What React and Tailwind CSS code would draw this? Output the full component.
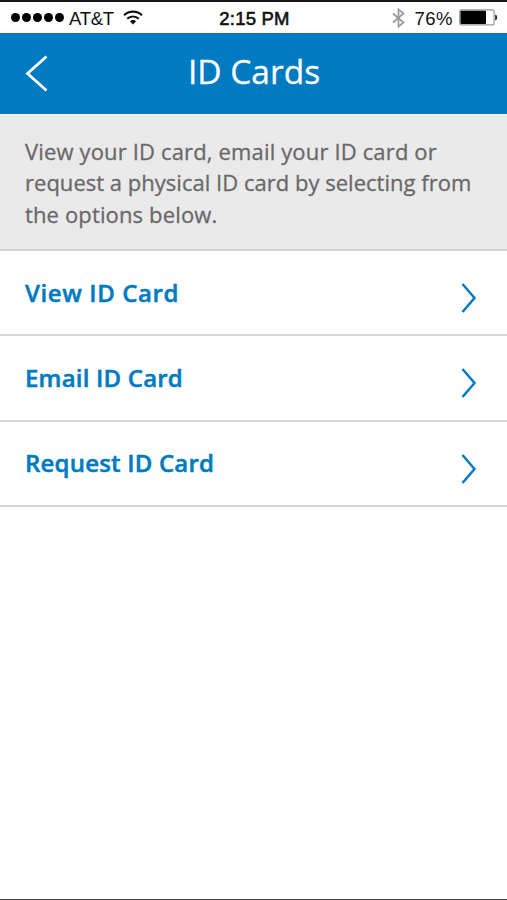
import React from 'react';

const options = [
  { id: 'view', label: 'View ID Card', tracking: 'tracking-[0.6px]' },
  { id: 'email', label: 'Email ID Card', tracking: 'tracking-[0.2px]' },
  { id: 'request', label: 'Request ID Card', tracking: 'tracking-[0.2px]' },
];

const WifiIcon = () => (
  <svg width="20" height="16" viewBox="0 0 20 16" fill="none" stroke="#111" strokeWidth="2.1">
    <path d="M1 5.2C6 .4 14 .4 19 5.2" />
    <path d="M4.2 8.7C7.4 5.7 12.6 5.7 15.8 8.7" />
    <path d="M6.9 11.2C8.7 9.6 11.3 9.6 13.1 11.2L10 14.6Z" fill="#111" stroke="none" />
  </svg>
);

const BluetoothIcon = () => (
  <svg width="13" height="20" viewBox="0 0 13 20" fill="none" stroke="#999" strokeWidth="1.7">
    <path d="M1 5.5L11.5 14.5L6.5 18.6V1.4L11.5 5.5L1 14.5" />
  </svg>
);

const BatteryIcon = () => (
  <svg width="39" height="17" viewBox="0 0 39 17">
    <rect x="0.7" y="0.9" width="34.4" height="15" rx="2" fill="#fff" stroke="#999" strokeWidth="1.2" />
    <rect x="1.5" y="1.7" width="25.5" height="13.4" rx="1" fill="#000" />
    <path d="M36.2 5.4C38.8 6 38.8 10.8 36.2 11.4Z" fill="#222" />
  </svg>
);

const StatusBar = () => (
  <div className="h-[33px] border-t-2 border-[#161314] bg-white grid grid-cols-3 items-center font-['Liberation_Sans',sans-serif] text-[18.5px] leading-none text-[#111]">
    <div className="flex items-center pl-[11px]">
      <div className="flex gap-[2px]">
        {[...Array(5)].map((_, index) => (
          <span key={index} className="size-[9px] rounded-full bg-black" />
        ))}
      </div>
      <span className="ml-[5px] mr-[9px] pt-[3px] tracking-[-0.3px]">AT&amp;T</span>
      <WifiIcon />
    </div>
    <span className="pl-[2px] pt-[3px] text-center tracking-[0.2px] [-webkit-text-stroke:0.6px_#111]">2:15 PM</span>
    <div className="flex items-center justify-end pr-[9px]">
      <BluetoothIcon />
      <span className="ml-[9px] mr-[6px] pt-[3px] tracking-[0.5px]">76%</span>
      <BatteryIcon />
    </div>
  </div>
);

const Header = () => (
  <header className="h-[81px] bg-[#007ac1] flex items-center px-[25px] text-white">
    <button aria-label="Back" className="w-12">
      <svg width="24" height="38" viewBox="0 0 24 38" fill="none" stroke="#fff" strokeWidth="2.8">
        <path d="M21.5 1.5L2.5 18.5L21.5 35.5" />
      </svg>
    </button>
    <h1 className="flex-1 pl-px pb-[4px] text-center text-[33.5px] leading-none [-webkit-text-stroke:0.3px_#fff]">ID Cards</h1>
    <span className="w-12" />
  </header>
);

const ChevronIcon = () => (
  <svg width="17" height="30" viewBox="0 0 17 30" fill="none" stroke="#007ac1" strokeWidth="2.5">
    <path d="M2.5 1L14.5 15L2.5 29" />
  </svg>
);

export default function App() {
  return (
    <div className="flex h-[900px] w-[507px] flex-col overflow-hidden border-b border-[#444] bg-white font-['Open_Sans',sans-serif]">
      <StatusBar />
      <Header />

      <div className="h-[137px] border-t border-b-2 border-t-[#f6f6f6] border-b-[#d3d3d3] bg-[#eaeaea] px-[25px] pt-[20.5px]">
        <p className="whitespace-nowrap text-[22px] leading-[31.5px] text-[#696969] [-webkit-text-stroke:0.3px_#696969]">
          <span className="block tracking-[0.15px]">View your ID card, email your ID card or</span>
          <span className="block tracking-[0.02px]">request a physical ID card by selecting from</span>
          <span className="block tracking-[0.14px]">the options below.</span>
        </p>
      </div>

      <ul>
        {options.map((option) => (
          <li
            key={option.id}
            className="flex h-[85.33px] items-center justify-between border-b-2 border-[#d8d8d8] pl-[25px] pr-[30px] text-[#007ac1]"
          >
            <span className={`whitespace-nowrap text-[24px] font-semibold leading-none [-webkit-text-stroke:0.5px_#007ac1] ${option.tracking}`}>
              {option.label}
            </span>
            <span className="pt-[11px]">
              <ChevronIcon />
            </span>
          </li>
        ))}
      </ul>
    </div>
  );
}
